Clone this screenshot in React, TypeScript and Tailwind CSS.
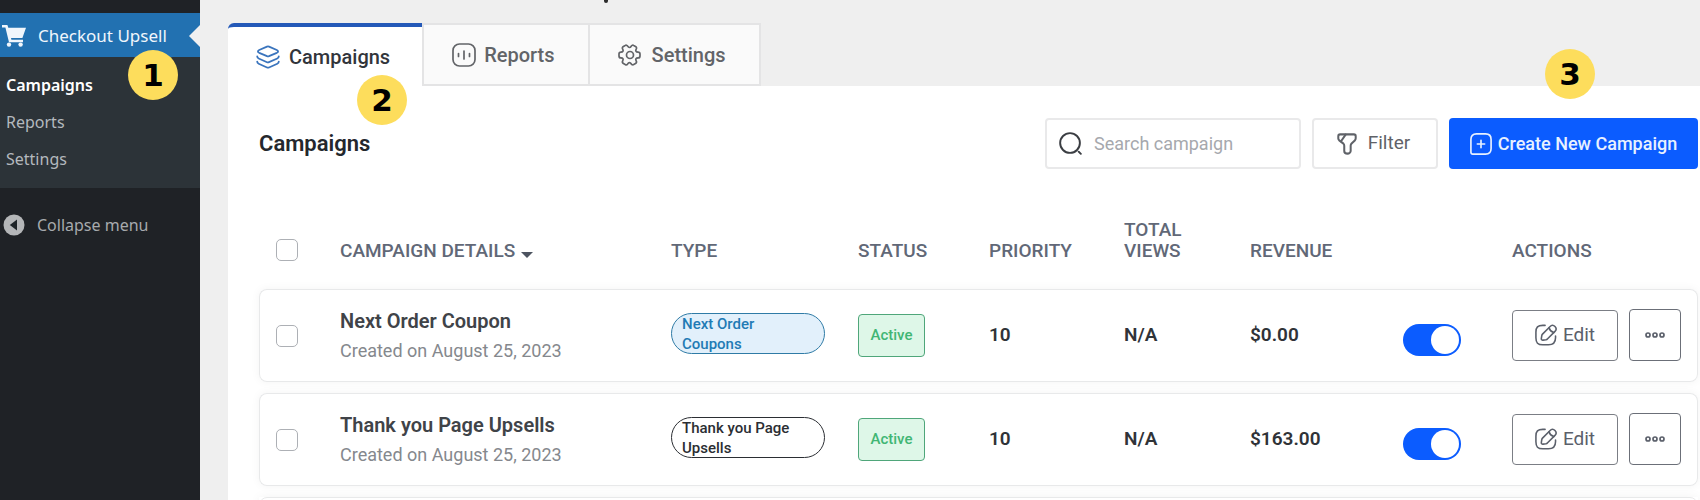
import React, { useState } from 'react';
import clsx from 'clsx';

type Campaign = {
  title: string;
  created: string;
  type: string;
  typeStyle: string;
  priority: number;
  views: string;
  revenue: string;
};

const CAMPAIGNS: Campaign[] = [
  {
    title: 'Next Order Coupon',
    created: 'Created on August 25, 2023',
    type: 'Next Order Coupons',
    typeStyle: 'border-[#2f7ba6] bg-[#e2f0fb] text-[#1f7bb5]',
    priority: 10,
    views: 'N/A',
    revenue: '$0.00'
  },
  {
    title: 'Thank you Page Upsells',
    created: 'Created on August 25, 2023',
    type: 'Thank you Page Upsells',
    typeStyle: 'border-[#2b2e33] bg-white text-[#2b2e33]',
    priority: 10,
    views: 'N/A',
    revenue: '$163.00'
  }
];

const LINE_ICON = {
  viewBox: '0 0 24 24',
  fill: 'none',
  stroke: 'currentColor',
  strokeLinecap: 'round' as const,
  strokeLinejoin: 'round' as const,
  'aria-hidden': true
};

function CartIcon() {
  return (
    <svg viewBox="0 0 24 22" fill="currentColor" className="h-[22px] w-6 shrink-0" aria-hidden="true">
      <path d="M0 0h5.400l.9 2.800H24l-3.600 10.200H9l.4 1.700H21v2.500H7L3.400 2.600H0z" />
      <circle cx="7" cy="19.600" r="2.200" />
      <circle cx="18.600" cy="19.600" r="2.200" />
    </svg>
  );
}

function CollapseIcon() {
  return (
    <svg viewBox="0 0 22 22" className="h-[22px] w-[22px] shrink-0" aria-hidden="true">
      <circle cx="11" cy="11" r="10.500" fill="#b4b6b8" />
      <path d="M14 5.600v10.800L6.800 11z" fill="#1d2327" />
    </svg>
  );
}

function LayersIcon() {
  return (
    <svg {...LINE_ICON} strokeWidth="1.800" className="h-6 w-6 text-[#3a74bd]">
      <path d="m13 1.600 7.800 3.400c1.700.8 1.700 2 0 2.800L13 11.200c-.8.3-1.200.3-2 0L3.200 7.800c-1.700-.8-1.700-2 0-2.800L11 1.600c.8-.3 1.200-.3 2 0z" />
      <path d="M1.200 11.300c0 .9.600 1.800 1.500 2.200l8.300 3.700c.7.300 1.300.3 2 0l8.300-3.700c.9-.4 1.500-1.300 1.500-2.200" />
      <path d="M1.200 16.600c0 .9.600 1.800 1.500 2.200l8.300 3.700c.7.300 1.300.3 2 0l8.300-3.700c.9-.4 1.500-1.300 1.500-2.200" />
    </svg>
  );
}

function ReportsIcon() {
  return (
    <svg {...LINE_ICON} strokeWidth="1.700" className="h-6 w-6">
      <rect x="1" y="1" width="22" height="22" rx="6.500" />
      <path d="M6.500 10.500v3M12 8v8M17.500 10.500v3" />
    </svg>
  );
}

function GearIcon() {
  return (
    <svg {...LINE_ICON} strokeWidth="1.700" className="h-6 w-6">
      <circle cx="12" cy="12" r="3.500" />
      <path d="M1 12.900v-1.800c0-1.100.9-2 2-2 1.900 0 2.700-1.300 1.700-3-.5-.9-.2-2.100.7-2.700l1.800-1c.8-.5 1.900-.2 2.400.6l.1.200c.9 1.700 2.500 1.700 3.500 0l.1-.2c.5-.8 1.600-1.100 2.400-.6l1.800 1c.9.6 1.200 1.800.7 2.700-1 1.700-.2 3 1.800 3 1.100 0 2 .9 2 2v1.800c0 1.100-.9 2-2 2-2 0-2.800 1.300-1.800 3 .5.9.2 2.100-.7 2.700l-1.800 1c-.8.5-1.900.2-2.400-.6l-.1-.2c-1-1.700-2.600-1.700-3.500 0l-.1.2c-.5.8-1.600 1.100-2.400.6l-1.800-1c-.9-.6-1.200-1.800-.7-2.700 1-1.700.2-3-1.700-3-1.100 0-2-.9-2-2z" />
    </svg>
  );
}

function SearchIcon() {
  return (
    <svg {...LINE_ICON} strokeWidth="2" className="h-[23px] w-[23px] shrink-0 text-[#3a3d42]">
      <circle cx="11.500" cy="11.500" r="10.300" />
      <path d="m20.500 20.500 2.300 2.300" />
    </svg>
  );
}

function FilterIcon() {
  return (
    <svg {...LINE_ICON} strokeWidth="2.200" className="h-[22px] w-[22px]">
      <path d="M4.500 1.500h15c1.100 0 2 .9 2 2v2.300c0 .8-.5 1.800-1 2.300L17 11.500c-.6.600-1 1.500-1 2.300v5.800c0 1.200-1.500 2.900-3.400 2.900S9 21.500 9 19.500v-5.700c0-.7-.4-1.700-.9-2.200L3.500 8c-.5-.5-1-1.400-1-2V3.500c0-1.100.9-2 2-2z" />
      <path d="M10.500 1.700 5.500 9" />
    </svg>
  );
}

function PlusIcon() {
  return (
    <svg {...LINE_ICON} strokeWidth="1.800" className="h-[22px] w-[22px] shrink-0">
      <path d="M7 1h10c4 0 6 2 6 6v10c0 4-2 6-6 6H3c-1.300 0-2-.7-2-2V7c0-4 2-6 6-6z" />
      <path d="M8 12h8M12 8v8" />
    </svg>
  );
}

function EditIcon() {
  return (
    <svg {...LINE_ICON} strokeWidth="1.700" className="h-[22px] w-[22px]">
      <path d="M11 1.500H8.500C3 1.500 1 3.500 1 9v6c0 5.500 2 7.700 7.500 7.700h6.200c5.500 0 7.700-2.200 7.700-7.700v-2" />
      <path d="M16.500 2.700 8.200 11c-.4.400-.7 1-.8 1.600l-.5 3.300c-.1 1.100.7 1.900 1.800 1.700l3.200-.4c.6-.1 1.300-.4 1.600-.8l8.300-8.300c1.500-1.500 2.100-3.100 0-5.300s-3.800-1.600-5.300-.1z" />
      <path d="M15.300 4c.7 2.500 2.700 4.500 5.200 5.200" />
    </svg>
  );
}

function DotsIcon() {
  return (
    <svg viewBox="0 0 20 6" fill="none" stroke="currentColor" strokeWidth="1.700" className="h-[6px] w-5" aria-hidden="true">
      <circle cx="3" cy="3" r="2" />
      <circle cx="10" cy="3" r="2" />
      <circle cx="17" cy="3" r="2" />
    </svg>
  );
}

function StepBadge({ step, className }: { step: number; className: string }) {
  return (
    <span
      className={clsx(
        "absolute z-10 flex h-[50px] w-[50px] items-center justify-center rounded-full bg-[#fddd5c] font-['DejaVu_Sans',sans-serif] text-[31px] leading-none font-bold text-black",
        className
      )}
    >
      {step}
    </span>
  );
}

function Sidebar() {
  return (
    <aside className="relative w-[200px] shrink-0 bg-[#1f2226] pt-[13px] font-['Noto_Sans',sans-serif] text-[16px]">
      <a href="#checkout-upsell" className="relative flex h-11 items-center gap-3 bg-[#2271b1] pt-[2px] pl-[2px] text-[17px] text-[#f0f6fc]">
        <CartIcon />
        Checkout Upsell
        <span className="absolute right-0 h-0 w-0 border-y-[11px] border-r-[11px] border-y-transparent border-r-[#f0f0f1]" />
      </a>
      <nav className="flex flex-col bg-[#2c3338] py-[10px] pl-[6px] leading-[37px] text-[#b4b9be]">
        <a href="#campaigns" className="font-semibold text-white">Campaigns</a>
        <a href="#reports">Reports</a>
        <a href="#settings">Settings</a>
      </nav>
      <button className="mt-[25px] flex items-center gap-3 pl-[3px] text-[#a7aaad]">
        <CollapseIcon />
        Collapse menu
      </button>
      <StepBadge step={1} className="top-[50px] right-[22px]" />
    </aside>
  );
}

function Tabs() {
  return (
    <nav className="flex h-[63px] text-[20px] font-medium text-[#626468]">
      <a
        href="#campaigns"
        className="relative flex items-center gap-[9px] rounded-tl-md border-t-4 border-[#2459b8] bg-white pr-8 pl-7 text-[#32353b]"
      >
        <LayersIcon />
        Campaigns
        <StepBadge step={2} className="top-[48px] right-[15px]" />
      </a>
      <a href="#reports" className="flex items-center gap-2 border-2 border-r-0 border-[#e4e4e5] bg-[#fafafa] pr-[33px] pl-7">
        <ReportsIcon />
        Reports
      </a>
      <a href="#settings" className="flex items-center gap-[10px] border-2 border-[#e4e4e5] bg-[#fafafa] pr-[33px] pl-7">
        <GearIcon />
        Settings
      </a>
    </nav>
  );
}

function Toolbar() {
  return (
    <div className="flex items-center gap-[11px]">
      <h2 className="mr-auto text-[22px] font-semibold text-[#24272d]">Campaigns</h2>
      <label className="flex h-[51px] w-64 items-center gap-3 rounded border-2 border-[#e9e9ea] px-3">
        <SearchIcon />
        <input
          type="text"
          aria-label="Search campaign"
          placeholder="Search campaign"
          className="min-w-0 flex-1 text-[18px] outline-none placeholder:text-[#a6a8ad]"
        />
      </label>
      <button className="flex h-[51px] w-[126px] items-center justify-center gap-[10px] rounded border-2 border-[#e9e9ea] pr-1 text-[19px] text-[#5f6268]">
        <FilterIcon />
        Filter
      </button>
      <div className="relative">
        <button className="flex h-[51px] w-[249px] items-center justify-center gap-[6px] rounded bg-[#0b5cff] text-[18px] font-medium text-[#e8f1ff]">
          <PlusIcon />
          Create New Campaign
        </button>
        <StepBadge step={3} className="-top-[69px] right-[103px]" />
      </div>
    </div>
  );
}

function Tick({ label }: { label: string }) {
  return (
    <input
      type="checkbox"
      aria-label={label}
      className="block h-[22px] w-[22px] appearance-none rounded-[5px] border border-[#adb0b5] bg-white checked:bg-[#0b5cff]"
    />
  );
}

function CampaignRow({ campaign }: { campaign: Campaign }) {
  const [enabled, setEnabled] = useState(true);
  return (
    <tr className="h-[93px] rounded-lg shadow-[0_0_10px_rgba(0,0,0,0.05)] *:border-y *:border-[#e8e9ea] *:bg-white">
      <td className="rounded-l-lg border-l pl-4">
        <Tick label={`Select ${campaign.title}`} />
      </td>
      <td>
        <div className="text-[20px] leading-[30px] font-semibold text-[#404348]">{campaign.title}</div>
        <div className="text-[18px] leading-[29px] font-normal text-[#85888d]">{campaign.created}</div>
      </td>
      <td>
        <span className={clsx('mb-1 flex h-[41px] w-[154px] items-center rounded-full border pr-6 pl-[10px] text-[15px] leading-[20px] font-medium', campaign.typeStyle)}>
          {campaign.type}
        </span>
      </td>
      <td>
        <span className="inline-flex h-[43px] w-[67px] items-center justify-center rounded border border-[#4fa67a] bg-[#def7e8] text-[15px] font-medium text-[#41b674]">
          Active
        </span>
      </td>
      <td>{campaign.priority}</td>
      <td>{campaign.views}</td>
      <td>{campaign.revenue}</td>
      <td>
        <input
          type="checkbox"
          role="switch"
          aria-label={`Enable ${campaign.title}`}
          checked={enabled}
          onChange={() => setEnabled(!enabled)}
          className="mt-2 flex h-8 w-[58px] appearance-none items-center rounded-full bg-[#8c8f94] px-[2px] before:h-7 before:w-7 before:rounded-full before:bg-white checked:justify-end checked:bg-[#0b5cff]"
        />
      </td>
      <td className="rounded-r-lg border-r">
        <div className="flex items-end gap-[11px] pb-[2px] text-[#5b606b]">
          <button className="flex h-[51px] w-[106px] items-center justify-center gap-[6px] rounded border border-[#7b7e85] text-[19px] font-normal">
            <EditIcon />
            Edit
          </button>
          <button aria-label="More actions" className="flex h-[52px] w-[52px] items-center justify-center rounded border border-[#6b6f78]">
            <DotsIcon />
          </button>
        </div>
      </td>
    </tr>
  );
}

function CampaignTable() {
  return (
    <table className="w-full table-fixed border-separate border-spacing-x-0 border-spacing-y-[11px] text-left text-[19px] font-semibold text-[#303338]">
      <colgroup>
        <col className="w-[81px]" />
        <col />
        <col className="w-[187px]" />
        <col className="w-[131px]" />
        <col className="w-[135px]" />
        <col className="w-[126px]" />
        <col className="w-[153px]" />
        <col className="w-[109px]" />
        <col className="w-[186px]" />
      </colgroup>
      <thead className="text-[19px] leading-[21px] text-[#616877]">
        <tr className="h-[98px] align-bottom *:pb-[17px] *:font-medium">
          <th className="pl-[17px]">
            <Tick label="Select all campaigns" />
          </th>
          <th>
            <button className="flex items-end gap-[6px]">
              CAMPAIGN DETAILS
              <span className="mb-[3px] border-x-[6px] border-t-[6px] border-x-transparent border-t-[#4d5460]" />
            </button>
          </th>
          <th>TYPE</th>
          <th>STATUS</th>
          <th>PRIORITY</th>
          <th className="pr-12">TOTAL VIEWS</th>
          <th>REVENUE</th>
          <td />
          <th>ACTIONS</th>
        </tr>
      </thead>
      <tbody>
        {CAMPAIGNS.map((campaign) => (
          <CampaignRow key={campaign.title} campaign={campaign} />
        ))}
        <tr className="h-[93px] shadow-[0_0_10px_rgba(0,0,0,0.05)]">
          <td colSpan={9} className="rounded-lg border border-[#e8e9ea] bg-white" />
        </tr>
      </tbody>
    </table>
  );
}

export default function App() {
  return (
    <div className="flex h-screen overflow-hidden bg-[#efefef] font-[Roboto,sans-serif]">
      <Sidebar />
      <main className="relative flex min-w-0 flex-1 flex-col pt-[23px] pl-7">
        <span className="absolute top-0 left-[404px] h-[3px] w-1 rounded-b-sm bg-[#2b2b2b]" />
        <Tabs />
        <section className="min-h-0 flex-1 bg-white pt-8 pr-[2px] pl-[31px]">
          <Toolbar />
          <CampaignTable />
        </section>
      </main>
    </div>
  );
}
